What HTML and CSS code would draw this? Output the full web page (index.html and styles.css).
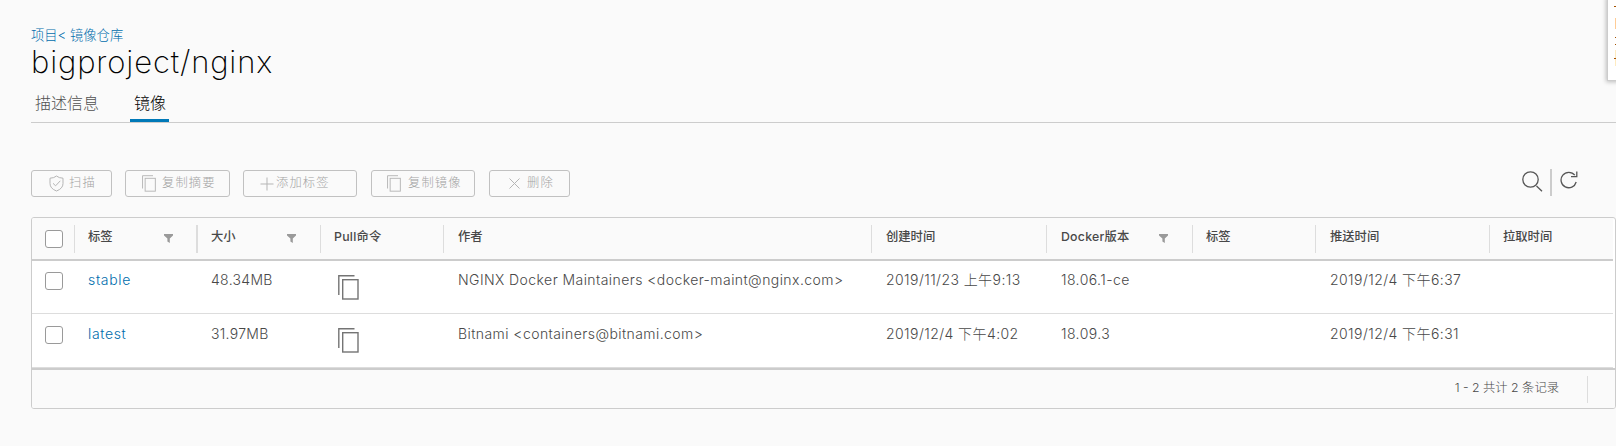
FILE: index.html
```html
<!DOCTYPE html>
<html lang="zh-CN">
<head>
<meta charset="utf-8">
<title>bigproject/nginx</title>
<link rel="stylesheet" href="styles.css">
</head>
<body>
<svg class="defs" width="0" height="0">
  <symbol id="copy" viewBox="0 0 21 25"><path d="M.8 20V.8H16.5" fill="none" stroke="currentColor" stroke-width="1.4"/><rect x="4.7" y="4.7" width="15.3" height="19.3" fill="none" stroke="currentColor" stroke-width="1.4"/></symbol>
  <symbol id="filter" viewBox="0 0 9 9"><path d="M0 0H9V1.5L5.8 4.5V9L3.4 7.6V4.5L0 1.5Z" fill="currentColor"/></symbol>
</svg>
<main class="page">
  <nav class="crumbs"><a>项目</a><a>&lt; 镜像仓库</a></nav>
  <h1 class="title">bigproject/nginx</h1>
  <div class="tabs"><span class="tab">描述信息</span><span class="tab active">镜像</span></div>
  <div class="toolbar">
    <button class="btn scan"><svg width="15" height="17" viewBox="0 0 15 17"><path d="M7.5 1Q10 3.1 14 3.2V8.5Q14 13.5 7.5 16Q1 13.5 1 8.5V3.2Q5 3.1 7.5 1ZM4 8.3 6.6 10.8 11.3 5.8"/></svg><span>扫描</span></button>
    <button class="btn digest"><svg width="14" height="17"><use href="#copy"/></svg><span>复制摘要</span></button>
    <button class="btn add"><svg width="14" height="14" viewBox="0 0 14 14"><path d="M7 .5V13.5M.5 7H13.5"/></svg><span>添加标签</span></button>
    <button class="btn image"><svg width="14" height="17"><use href="#copy"/></svg><span>复制镜像</span></button>
    <button class="btn delete"><svg width="11" height="11" viewBox="0 0 11 11"><path d="M.5 .5 10.5 10.5M10.5 .5 .5 10.5"/></svg><span>删除</span></button>
    <div class="tools">
      <svg width="21" height="21" viewBox="0 0 21 21"><circle cx="8.5" cy="8.5" r="7.7"/><path d="M14.5 15 20 20.3"/></svg>
      <i class="bar"></i>
      <svg width="18" height="18" viewBox="0 0 18 18"><path d="M14.8 4.2A7.7 7.7 0 1 0 16.2 11M16.8 .5V5.6H11"/></svg>
    </div>
  </div>
  <section class="grid">
    <div class="row head">
      <div class="pick"><i class="check"></i></div>
      <div class="cell">标签<svg class="filter"><use href="#filter"/></svg></div>
      <div class="cell wide">大小<svg class="filter"><use href="#filter"/></svg></div>
      <div class="cell"><span class="latin">Pull命令</span></div>
      <div class="cell shift">作者</div>
      <div class="cell shift">创建时间</div>
      <div class="cell shift"><span class="latin">Docker版本</span><svg class="filter"><use href="#filter"/></svg></div>
      <div class="cell">标签</div>
      <div class="cell shift">推送时间</div>
      <div class="cell">拉取时间</div>
    </div>
    <div class="row item">
      <div class="pick"><i class="check"></i></div>
      <div class="cell link"><a>stable</a></div>
      <div class="cell size">48.34MB</div>
      <div class="cell"><svg class="copy"><use href="#copy"/></svg></div>
      <div class="cell shift">NGINX Docker Maintainers &lt;docker-maint@nginx.com&gt;</div>
      <div class="cell shift">2019/11/23 上午9:13</div>
      <div class="cell shift">18.06.1-ce</div>
      <div class="cell"></div>
      <div class="cell shift">2019/12/4 下午6:37</div>
      <div class="cell"></div>
    </div>
    <div class="row item last">
      <div class="pick"><i class="check"></i></div>
      <div class="cell link"><a>latest</a></div>
      <div class="cell size">31.97MB</div>
      <div class="cell"><svg class="copy"><use href="#copy"/></svg></div>
      <div class="cell shift">Bitnami &lt;containers@bitnami.com&gt;</div>
      <div class="cell shift">2019/12/4 下午4:02</div>
      <div class="cell shift">18.09.3</div>
      <div class="cell"></div>
      <div class="cell shift">2019/12/4 下午6:31</div>
      <div class="cell"></div>
    </div>
    <footer class="foot"><span class="count">1 - 2 共计 2 条记录</span></footer>
  </section>
</main>
<aside class="panel"><i class="m m1"></i><i class="m m2"></i><i class="m m3"></i><i class="m m4"></i><i class="m m5"></i><i class="m m6"></i></aside>
</body>
</html>
```
FILE: styles.css
```css
* { box-sizing: border-box; }
html, body { margin: 0; height: 446px; overflow: hidden; background: #fafafa; }
body { position: relative; color: #484848; font-family: Inter, "Noto Sans CJK SC", sans-serif; font-size: 14px; font-weight: 300; }
.defs { position: absolute; }
a { color: #006dac; }
.page { padding: 25px 0 0 31px; }
.crumbs { height: 20px; line-height: 20px; font-size: 13.3px; }
.title { margin: 0; height: 37px; line-height: 33px; font-size: 31px; font-weight: 250; color: #000; letter-spacing: 0.85px; }
.tabs { display: flex; height: 41px; border-bottom: 1px solid #ccc; gap: 28px; font-size: 16px; line-height: 42px; }
.tab { padding: 0 3px 0 4px; color: #505050; }
.tab.active { color: #000; border-bottom: 3px solid #0079b8; }
.toolbar { display: flex; height: 27px; margin-top: 47px; }
.btn { display: flex; align-items: center; height: 27px; margin: 0 13px 0 0; padding: 0; border: 1px solid #c1c1c1; border-radius: 3px; background: none; color: #a4a4a4; font: 300 12.3px/24px Inter, "Noto Sans CJK SC", sans-serif; letter-spacing: 1.1px; white-space: nowrap; }
.btn span { margin-top: -1px; }
.btn svg { flex: none; fill: none; stroke: #b5b5b5; stroke-width: 1; overflow: visible; color: #b5b5b5; }
.scan { width: 81px; padding-left: 17px; gap: 5px; }
.digest { width: 105px; padding-left: 16px; gap: 6px; }
.add { width: 114px; padding-left: 16px; gap: 2px; margin-right: 14px; }
.image { width: 104px; padding-left: 15px; gap: 7px; margin-right: 14px; }
.delete { width: 81px; padding-left: 19px; gap: 7px; }
.tools { display: flex; margin-left: auto; padding-right: 38px; }
.tools svg { margin-top: 1px; fill: none; stroke: #565656; stroke-width: 1.3; }
.bar { width: 2px; height: 27px; margin: -1px 8px 0 7px; background: #ccc; }
.grid { width: 1585px; height: 192px; margin-top: 20px; border: 1px solid #ccc; border-radius: 3px; background: #fff; overflow: hidden; }
.row { display: grid; width: 1581px; grid-template-columns: 42px 123px 123px 123px 428px 175px 146px 123px 174px 1fr; }
.head { height: 43px; background: #fafafa; border-bottom: 2px solid #ccc; font-size: 12.3px; font-weight: 500; }
.head .cell { height: 28px; margin-top: 7px; border-left: 1px solid #ddd; display: flex; padding-left: 13px; line-height: 24px; }
.head .wide { border-left-width: 2px; margin-left: -1px; }
.head .shift { padding-left: 14px; }
.latin { letter-spacing: 0.25px; }
.filter { width: 9px; height: 9px; color: #9a9a9a; margin: 9px 24px 0 auto; }
.pick { padding: 12px 0 0 13px; }
.check { display: block; width: 18px; height: 18px; border: 1px solid #9a9a9a; border-radius: 3px; background: #fff; }
.item { height: 53px; border-bottom: 1px solid #ddd; letter-spacing: 0.43px; }
.item .cell { padding-left: 14px; line-height: 20px; padding-top: 9px; white-space: nowrap; }
.item .shift { padding-left: 15px; }
.item .link { letter-spacing: 0.65px; }
.item .size { letter-spacing: 0.3px; }
.item .pick { padding-top: 11px; }
.copy { display: block; width: 21px; height: 25px; margin: 5px 0 0 4px; color: #747474; }
.last { height: 54px; }
.last .pick { padding-top: 12px; }
.last .cell { padding-top: 10px; }
.last .copy { margin-top: 4px; }
.foot { display: flex; justify-content: flex-end; width: 1583px; height: 42px; border-top: 2px solid #ccc; background: #fafafa; font-size: 12.3px; }
.count { height: 27px; margin-top: 6px; padding-right: 28px; margin-right: 27px; border-right: 1px solid #ddd; line-height: 24px; }
.panel { position: absolute; left: 1607px; top: -2px; width: 12px; height: 83px; border: 1px solid #ccc; background: #fff; box-shadow: 0 0 4px 1px #bbb; }
.m { position: absolute; right: 2px; width: 1px; height: 1px; background: #a45100; }
.m1 { top: 7px; width: 2px; }
.m2 { top: 19px; height: 11px; background: #ffcc96; }
.m3 { top: 38px; }
.m4 { top: 45px; }
.m5 { top: 51px; height: 16px; background: #ffebc0; }
.m6 { top: 59px; width: 2px; }
```
